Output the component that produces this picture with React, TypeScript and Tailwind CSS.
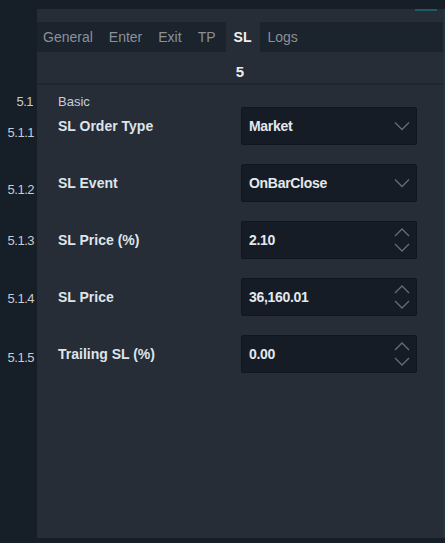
const font = { fontFamily: '"Liberation Sans", Arial, sans-serif' };

type Field = {
    num: string;
    numPad: string;
    label: string;
    value: string;
    kind: "select" | "number";
};

const fields: Field[] = [
    { num: "5.1.1", numPad: "pt-[19px]", label: "SL Order Type", value: "Market", kind: "select" },
    { num: "5.1.2", numPad: "pt-[19px]", label: "SL Event", value: "OnBarClose", kind: "select" },
    { num: "5.1.3", numPad: "pt-[13px]", label: "SL Price (%)", value: "2.10", kind: "number" },
    { num: "5.1.4", numPad: "pt-[14px]", label: "SL Price", value: "36,160.01", kind: "number" },
    { num: "5.1.5", numPad: "pt-[16px]", label: "Trailing SL (%)", value: "0.00", kind: "number" },
];

function SelectChevron() {
    return (
        <svg width="16" height="10" viewBox="0 0 16 10" fill="none" stroke="#646d79" strokeWidth="1.3">
            <path d="M1 1.5 L8 8.5 L15 1.5" />
        </svg>
    );
}

function Spinner() {
    return (
        <svg width="16" height="26" viewBox="0 0 16 26" fill="none" stroke="#646d79" strokeWidth="1.3">
            <path d="M1 9 L8 2 L15 9" />
            <path d="M1 17 L8 24 L15 17" />
        </svg>
    );
}

function Row({ f }: { f: Field }) {
    return (
        <div className="flex h-[38px]">
            <div className={`w-[37px] shrink-0 pr-[3px] text-right text-[13px] leading-none tracking-[-0.5px] text-[#c7ccd2] ${f.numPad}`}>
                {f.num}
            </div>
            <div className="flex flex-1 items-center border-r-2 border-[#1b3743] bg-[#262d37] pl-[21px] pr-[26px]">
                <span className="flex-1 text-[14px] font-bold text-[#dfe4ea]">{f.label}</span>
                <div className="flex h-[38px] w-[176px] items-center justify-between rounded-[2px] border border-[#10161d] bg-[#151c25] pl-[7px] pr-[6px]">
                    <span className="text-[14px] font-bold tracking-[-0.3px] text-[#e4e8ee]">{f.value}</span>
                    {f.kind === "select" ? <SelectChevron /> : <Spinner />}
                </div>
            </div>
        </div>
    );
}

function Spacer({ h }: { h: string }) {
    return (
        <div className={`flex ${h}`}>
            <div className="w-[37px] shrink-0" />
            <div className="flex-1 border-r-2 border-[#1b3743] bg-[#262d37]" />
        </div>
    );
}

export default function App() {
    return (
        <div style={font} className="flex h-[543px] w-[445px] flex-col bg-[#161e28] pt-[9px] pb-[5px]">
            {/* top strip + tabs */}
            <div className="flex">
                <div className="w-[37px] shrink-0" />
                <div className="flex-1 border-r-2 border-[#1b3743] bg-[#262d37]">
                    <div className="relative h-[13px]">
                        <div className="absolute right-[6px] top-0 h-[2px] w-[22px] bg-[#1f5a66]" />
                    </div>
                    <div className="flex h-[30px] items-stretch text-[14px] text-[#8a919a]">
                        <div className="flex items-center gap-[16px] bg-[#1b232c] pl-[6px] pr-[10px]">
                            <span>General</span>
                            <span>Enter</span>
                            <span>Exit</span>
                            <span>TP</span>
                        </div>
                        <div className="flex w-[34px] items-center justify-center font-bold text-[#eef1f4]">SL</div>
                        <div className="flex flex-1 items-center bg-[#1b232c] pl-[8px]">Logs</div>
                    </div>
                    <div className="flex h-[33px] items-end justify-center border-b-2 border-[#20272f] pb-[4px] text-[15px] font-bold leading-none text-[#e8ecf0]">
                        5
                    </div>
                </div>
            </div>

            {/* Basic */}
            <div className="flex h-[22px]">
                <div className="w-[37px] shrink-0 pt-[10px] pr-[4px] text-right text-[13px] leading-none tracking-[-0.5px] text-[#c7ccd2]">5.1</div>
                <div className="flex-1 border-r-2 border-[#1b3743] bg-[#262d37] pl-[21px] pt-[10px] text-[13px] leading-none text-[#c9ced4]">
                    Basic
                </div>
            </div>

            {fields.map((f, i) => (
                <div key={f.num} className="flex flex-col">
                    <Row f={f} />
                    {i < fields.length - 1 && <Spacer h="h-[19px]" />}
                </div>
            ))}

            <div className="flex flex-1">
                <div className="w-[37px] shrink-0" />
                <div className="flex-1 border-r-2 border-[#1b3743] bg-[#262d37]" />
            </div>
        </div>
    );
}
